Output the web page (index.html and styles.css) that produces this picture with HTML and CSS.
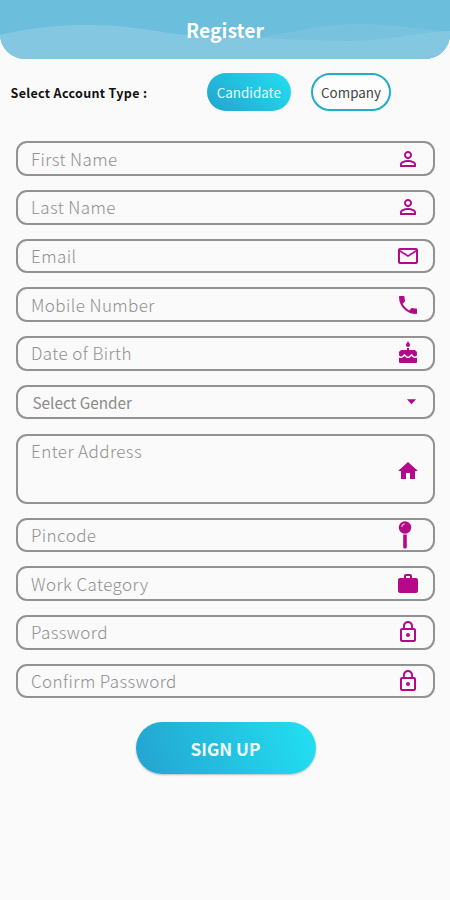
FILE: index.html
```html
<!DOCTYPE html>
<html lang="en">

<head>
    <meta charset="UTF-8">
    <meta name="viewport" content="width=device-width, initial-scale=1.0">
    <title>Register</title>
    <link rel="stylesheet" href="styles.css">
</head>

<body>

    <svg class="symbols" width="0" height="0">
        <symbol id="person" viewBox="0 0 24 24">
            <path d="M12 5.9a2.1 2.1 0 1 1 0 4.2 2.1 2.1 0 0 1 0-4.2m0 9c2.97 0 6.1 1.46 6.1 2.1v1.1H5.9V17c0-.64 3.13-2.1 6.1-2.1M12 4C9.79 4 8 5.79 8 8s1.79 4 4 4 4-1.79 4-4-1.79-4-4-4zm0 9c-2.67 0-8 1.34-8 4v3h16v-3c0-2.66-5.33-4-8-4z" />
        </symbol>
        <symbol id="lock" viewBox="0 0 24 24">
            <path d="M12 17c1.1 0 2-.9 2-2s-.9-2-2-2-2 .9-2 2 .9 2 2 2zm6-9h-1V6c0-2.76-2.24-5-5-5S7 3.24 7 6v2H6c-1.1 0-2 .9-2 2v10c0 1.1.9 2 2 2h12c1.1 0 2-.9 2-2V10c0-1.1-.9-2-2-2zM8.9 6c0-1.71 1.39-3.1 3.1-3.1s3.1 1.39 3.1 3.1v2H8.9V6zM18 20H6V10h12v10z" />
        </symbol>
    </svg>

    <header class="header">
        <svg class="waves" viewBox="0 0 450 59" preserveAspectRatio="none">
            <path class="wave-back" d="M225 40C280 39 305 24 360 24C395 24 420 30 450 31V59H225Z" />
            <path class="wave-front" d="M0 35C35 27 60 25 90 25C145 25 170 38 240 38C285 38 310 41 350 41C390 40 415 33 450 31V59H0Z" />
        </svg>
        <h1>Register</h1>
    </header>

    <div class="account-type">
        <span class="account-label">Select Account Type :</span>
        <button class="pill pill-active">Candidate</button>
        <button class="pill">Company</button>
    </div>

    <form class="form">
        <div class="field">
            <input type="text" placeholder="First Name">
            <svg class="icon"><use href="#person" /></svg>
        </div>
        <div class="field">
            <input type="text" placeholder="Last Name">
            <svg class="icon"><use href="#person" /></svg>
        </div>
        <div class="field">
            <input type="text" placeholder="Email">
            <svg class="icon" viewBox="0 0 24 24">
                <path d="M22 6c0-1.1-.9-2-2-2H4c-1.1 0-2 .9-2 2v12c0 1.1.9 2 2 2h16c1.1 0 2-.9 2-2V6zm-2 0l-8 5-8-5h16zm0 12H4V8l8 5 8-5v10z" />
            </svg>
        </div>
        <div class="field">
            <input type="text" placeholder="Mobile Number">
            <svg class="icon" viewBox="0 0 24 24">
                <path d="M6.62 10.79c1.44 2.83 3.76 5.14 6.59 6.59l2.2-2.2c.27-.27.67-.36 1.02-.24 1.12.37 2.33.57 3.57.57.55 0 1 .45 1 1V20c0 .55-.45 1-1 1-9.39 0-17-7.61-17-17 0-.55.45-1 1-1h3.5c.55 0 1 .45 1 1 0 1.25.2 2.45.57 3.57.11.35.03.74-.25 1.02l-2.2 2.2z" />
            </svg>
        </div>
        <div class="field">
            <input type="text" placeholder="Date of Birth">
            <svg class="icon" viewBox="0 0 24 24">
                <path d="M12 6c1.11 0 2-.9 2-2 0-.38-.1-.73-.29-1.03L12 0l-1.71 2.97c-.19.3-.29.65-.29 1.03 0 1.1.9 2 2 2zm4.6 9.99l-1.07-1.07-1.08 1.07c-1.3 1.3-3.58 1.31-4.89 0l-1.07-1.07-1.09 1.07C6.75 16.64 5.88 17 4.96 17c-.73 0-1.4-.23-1.96-.61V21c0 .55.45 1 1 1h16c.55 0 1-.45 1-1v-4.61c-.56.38-1.23.61-1.96.61-.92 0-1.79-.36-2.44-1.01zM18 9h-5V7h-2v2H6c-1.66 0-3 1.34-3 3v1.54c0 1.08.88 1.96 1.96 1.96.52 0 1.02-.2 1.38-.57l2.14-2.13 2.13 2.13c.74.74 2.03.74 2.77 0l2.14-2.13 2.13 2.13c.37.37.86.57 1.38.57 1.08 0 1.96-.88 1.96-1.96V12C21 10.34 19.66 9 18 9z" />
            </svg>
        </div>
        <div class="field field-select">
            <span>Select Gender</span>
            <svg class="icon icon-arrow" viewBox="0 0 12 6">
                <path d="M1 0h10L6 5.5z" />
            </svg>
        </div>
        <div class="field field-address">
            <textarea placeholder="Enter Address"></textarea>
            <svg class="icon icon-home" viewBox="0 0 24 24">
                <path d="M10 20v-6h4v6h5v-8h3L12 3 2 12h3v8z" />
            </svg>
        </div>
        <div class="field">
            <input type="text" placeholder="Pincode">
            <svg class="icon icon-pin" viewBox="0 0 14 28">
                <circle cx="7" cy="6.5" r="6.2" />
                <rect x="5.2" y="12" width="3.6" height="15.5" rx="1.5" />
                <path class="shine" d="M3.8 6A3.4 3.4 0 0 1 6.8 3" />
                <path class="shine" d="M5.2 13.2h3.6" />
            </svg>
        </div>
        <div class="field">
            <input type="text" placeholder="Work Category">
            <svg class="icon" viewBox="0 0 24 24">
                <path d="M20 6h-4V4c0-1.11-.89-2-2-2h-4c-1.11 0-2 .89-2 2v2H4c-1.11 0-1.99.89-1.99 2L2 19c0 1.11.89 2 2 2h16c1.11 0 2-.89 2-2V8c0-1.11-.89-2-2-2zm-6 0h-4V4h4v2z" />
            </svg>
        </div>
        <div class="field">
            <input type="text" placeholder="Password">
            <svg class="icon"><use href="#lock" /></svg>
        </div>
        <div class="field">
            <input type="text" placeholder="Confirm Password">
            <svg class="icon"><use href="#lock" /></svg>
        </div>

        <button type="button" class="signup">SIGN UP</button>
    </form>

</body>

</html>
```
FILE: styles.css
```css
body {
    margin: 0;
    height: 900px;
    background-color: #fafafa;
    font-family: 'Noto Sans CJK SC', 'Noto Sans', sans-serif;
    overflow: hidden;
}

button,
input,
textarea {
    font-family: inherit;
    box-sizing: border-box;
}

.symbols {
    display: block;
}

.header {
    display: grid;
    height: 59px;
    background-color: #6bbedc;
    border-radius: 0 0 25px 25px;
    overflow: hidden;
}

.header h1,
.waves {
    grid-area: 1 / 1;
}

.header h1 {
    margin: 0;
    align-self: center;
    text-align: center;
    color: #fff;
    font-size: 19.4px;
    line-height: 28px;
    font-weight: 700;
    z-index: 1;
}

.waves {
    width: 100%;
    height: 59px;
}

.wave-back {
    fill: #78c2de;
}

.wave-front {
    fill: #84c7e1;
}

.account-type {
    display: flex;
    align-items: center;
    height: 38px;
    margin-top: 14px;
    padding-left: 10.5px;
}

.account-label {
    width: 196px;
    color: #111;
    font-size: 12.5px;
    font-weight: 700;
    letter-spacing: 0.33px;
    white-space: nowrap;
}

.pill {
    width: 80px;
    height: 38px;
    margin-right: 20px;
    padding: 0;
    border: 2px solid #22adc6;
    border-radius: 19px;
    background-color: #fdfdfd;
    color: #444;
    font-size: 13.4px;
}

.pill-active {
    width: 84.5px;
    border: none;
    background: linear-gradient(45deg, #22a4cf, #22dff0);
    color: #e8fbff;
}

.form {
    display: flex;
    flex-direction: column;
    gap: 14.2px;
    padding: 30.4px 15px 0 16px;
}

.field {
    display: flex;
    align-items: center;
    height: 34.5px;
    box-sizing: border-box;
    padding: 0 13px 0 13px;
    border: 2px solid #929292;
    border-radius: 11px;
}

.field input,
.field textarea {
    flex: 1;
    min-width: 0;
    padding: 0;
    border: none;
    outline: none;
    background: none;
    font-size: 17px;
    line-height: 24px;
    font-weight: 300;
    letter-spacing: 0.42px;
    resize: none;
}

.field input::placeholder,
.field textarea::placeholder {
    color: #909090;
}

.field-select {
    justify-content: space-between;
    padding-left: 14.5px;
    color: #8a8a8a;
    font-size: 15.3px;
}

.field-address {
    height: 70px;
}

.field-address textarea {
    height: 60px;
}

.icon {
    width: 24px;
    height: 24px;
    fill: #b5098c;
    flex-shrink: 0;
}

.icon-arrow {
    width: 11px;
    height: 6px;
    margin-right: 3px;
}

.icon-home {
    margin-top: 5px;
}

.icon-pin {
    width: 14px;
    height: 28px;
    margin-right: 8px;
}

.shine {
    fill: none;
    stroke: #f0a8dc;
    stroke-width: 1.2;
}

.signup {
    align-self: center;
    width: 180px;
    height: 52px;
    margin-top: 10px;
    border: none;
    border-radius: 26px;
    background: linear-gradient(70deg, #24a3d0, #22e0f2);
    box-shadow: 0 1px 2px rgba(0, 0, 0, 0.25);
    color: #f4fdff;
    font-size: 17.2px;
    font-weight: 700;
}
```
